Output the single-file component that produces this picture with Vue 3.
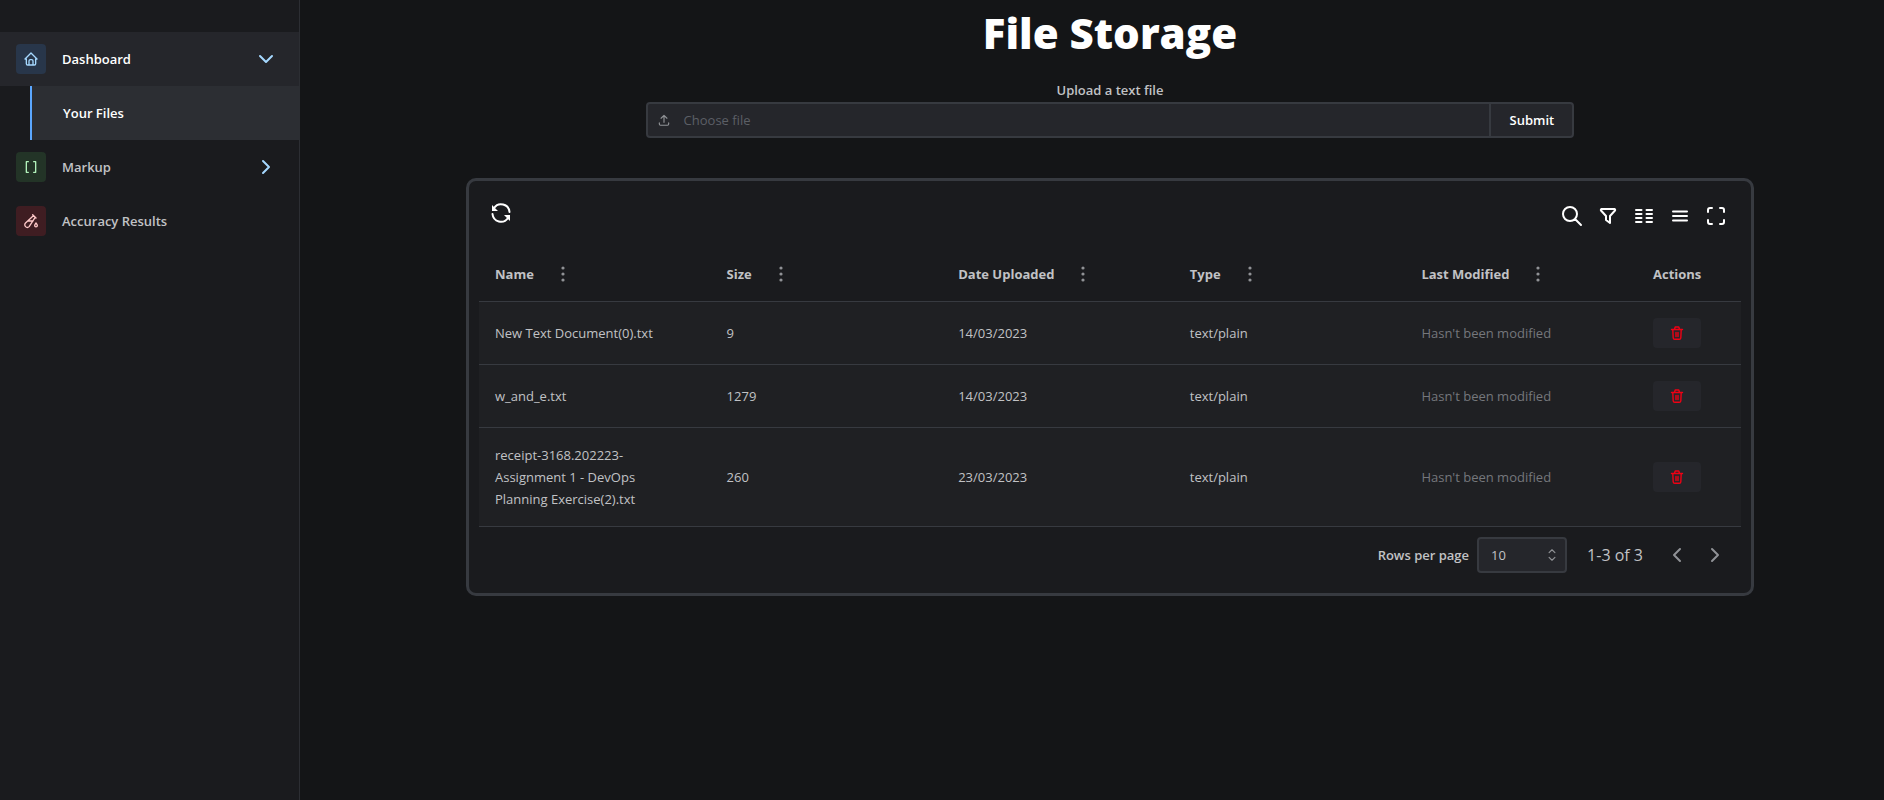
<script setup>
import { ref } from 'vue'

const pageSize = ref('10')
const columns = ['Name', 'Size', 'Date Uploaded', 'Type', 'Last Modified']
const files = [
  { name: 'New Text Document(0).txt', size: 9, date: '14/03/2023', type: 'text/plain' },
  { name: 'w_and_e.txt', size: 1279, date: '14/03/2023', type: 'text/plain' },
  { name: 'receipt-3168.202223-Assignment 1 - DevOps Planning Exercise(2).txt', size: 260, date: '23/03/2023', type: 'text/plain' },
]
const tools = [
  { label: 'Show search', d: 'M3 10a7 7 0 1 0 14 0a7 7 0 1 0 -14 0M21 21l-6 -6' },
  { label: 'Show filters', d: 'M5.5 5h13a1 1 0 0 1 .5 1.5l-5 5.5v7l-4 -3v-4l-5 -5.5a1 1 0 0 1 .5 -1.5' },
  { label: 'Show columns', d: 'M4 6h5.5M4 10h5.5M4 14h5.5M4 18h5.5M14.5 6H20M14.5 10H20M14.5 14H20M14.5 18H20' },
  { label: 'Toggle density', d: 'M5 7.5h14M5 12h14M5 16.5h14' },
  { label: 'Full screen', d: 'M4 8V6a2 2 0 0 1 2 -2h2M4 16v2a2 2 0 0 0 2 2h2M16 4h2a2 2 0 0 1 2 2v2M16 20h2a2 2 0 0 0 2 -2v-2' },
]
</script>

<template>
  <div class="layout">
    <nav class="sidebar">
      <button type="button" class="item open">
        <span class="badge blue">
          <svg width="16" height="16" viewBox="0 0 24 24"><path d="M5 12H3l9 -9l9 9h-2v7a2 2 0 0 1 -2 2H7a2 2 0 0 1 -2 -2v-7M9 21v-6a2 2 0 0 1 2 -2h2a2 2 0 0 1 2 2v6" /></svg>
        </span>
        <span class="text">Dashboard</span>
        <svg class="arrow" width="24" height="24" viewBox="0 0 24 24"><path d="M6 9l6 6l6 -6" /></svg>
      </button>
      <a href="#files" class="sub">Your Files</a>
      <button type="button" class="item">
        <span class="badge green">
          <svg width="16" height="16" viewBox="0 0 24 24"><path d="M8 4H5v16h3M16 4h3v16h-3" /></svg>
        </span>
        <span class="text">Markup</span>
        <svg class="arrow" width="24" height="24" viewBox="0 0 24 24"><path d="M9 6l6 6l-6 6" /></svg>
      </button>
      <a href="#results" class="item">
        <span class="badge red">
          <svg width="16" height="16" viewBox="0 0 24 24"><path d="M14.5 2.500l5 5M15.500 4L3.800 15a3.800 3.800 0 0 0 5.400 5.400L18 7M8 12h7M19.500 15c1.500 2 2 2.800 2 3.800a2 2 0 0 1 -4 0c0 -1 .5 -1.800 2 -3.800z" /></svg>
        </span>
        <span class="text">Accuracy Results</span>
      </a>
    </nav>

    <main class="main">
      <h1 class="title">File Storage</h1>
      <form class="upload" @submit.prevent>
        <label for="upload-file" class="upload-label">Upload a text file</label>
        <div class="upload-row">
          <button id="upload-file" type="button" class="chooser">
            <svg width="14" height="14" viewBox="0 0 24 24"><path d="M4 17v2a2 2 0 0 0 2 2h12a2 2 0 0 0 2 -2v-2M7 9l5 -5l5 5M12 4v12" /></svg>
            <span>Choose file</span>
          </button>
          <button type="submit" class="submit">Submit</button>
        </div>
      </form>

      <section class="card">
        <div class="toolbar">
          <button type="button" class="icon-btn small" aria-label="Refresh">
            <svg width="20" height="20" viewBox="0 0 20 20">
              <path d="M18.500 9A8.500 8.500 0 0 0 3 5M1.500 11A8.500 8.500 0 0 0 17 15" />
              <path class="solid" d="M1 2v6h6zM19 18v-6h-6z" />
            </svg>
          </button>
          <div class="tools">
            <button v-for="t in tools" :key="t.label" type="button" class="icon-btn" :aria-label="t.label">
              <svg width="24" height="24" viewBox="0 0 24 24"><path :d="t.d" /></svg>
            </button>
          </div>
        </div>

        <table class="table">
          <thead>
            <tr>
              <th v-for="c in columns" :key="c">
                <div class="head">
                  {{ c }}
                  <button type="button" class="dots" aria-label="Column actions">
                    <svg width="6" height="18" viewBox="0 0 6 18"><circle cx="3" cy="3" r="1.600" /><circle cx="3" cy="9" r="1.600" /><circle cx="3" cy="15" r="1.600" /></svg>
                  </button>
                </div>
              </th>
              <th class="actions">Actions</th>
            </tr>
          </thead>
          <tbody>
            <tr v-for="f in files" :key="f.name">
              <td class="name">{{ f.name }}</td>
              <td>{{ f.size }}</td>
              <td>{{ f.date }}</td>
              <td>{{ f.type }}</td>
              <td class="dim">Hasn't been modified</td>
              <td>
                <button type="button" class="delete" aria-label="Delete">
                  <svg width="16" height="16" viewBox="0 0 16 16"><path d="M2.500 4.500h11M3.800 4.500l.4 8.500a1.500 1.500 0 0 0 1.500 1.300h4.600a1.500 1.500 0 0 0 1.500 -1.300l.4 -8.500M5.500 4.300l.7 -2.300h3.600l.7 2.300M7 7.500v4M9 7.500v4" /></svg>
                </button>
              </td>
            </tr>
          </tbody>
        </table>

        <div class="footer">
          <label for="page-size" class="rows-label">Rows per page</label>
          <div class="select">
            <select id="page-size" v-model="pageSize">
              <option>10</option>
              <option>25</option>
              <option>50</option>
            </select>
            <svg width="14" height="14" viewBox="0 0 24 24"><path d="M7 8l5 -5l5 5M7 16l5 5l5 -5" /></svg>
          </div>
          <span class="range">1-3 of 3</span>
          <div class="pager">
            <button type="button" aria-label="Previous page"><svg width="24" height="24" viewBox="0 0 24 24"><path d="M15 6l-6 6l6 6" /></svg></button>
            <button type="button" aria-label="Next page"><svg width="24" height="24" viewBox="0 0 24 24"><path d="M9 6l6 6l-6 6" /></svg></button>
          </div>
        </div>
      </section>
    </main>
  </div>
</template>

<style>
body {
  background: #141517;
}
</style>

<style scoped>
.layout {
  display: flex;
  min-height: 100vh;
  font-family: 'Segoe UI', 'Open Sans', 'Noto Sans', sans-serif;
  font-size: 13px;
  line-height: 22px;
  color: #c1c2c5;
  background: #141517;
}
.layout *,
.layout {
  box-sizing: border-box;
}
button,
select {
  font: inherit;
  color: inherit;
  background: none;
  border: 0;
  padding: 0;
  margin: 0;
}
svg {
  display: block;
  flex: none;
  fill: none;
  stroke: currentColor;
  stroke-width: 2;
  stroke-linecap: round;
  stroke-linejoin: round;
}
a {
  color: inherit;
  text-decoration: none;
}

.sidebar {
  width: 300px;
  flex: none;
  padding-top: 32px;
  background: #1a1b1e;
  border-right: 1px solid #2c2e33;
}
.item {
  display: flex;
  align-items: center;
  gap: 16px;
  width: 100%;
  height: 54px;
  padding: 0 21px 0 16px;
  font-weight: 600;
  text-align: left;
}
.item.open {
  background: #25262b;
  color: #fff;
}
.text {
  flex: 1;
}
.arrow {
  color: #a5d8ff;
}
.badge {
  display: grid;
  place-items: center;
  width: 30px;
  height: 30px;
  border-radius: 4px;
}
.blue {
  background: #28364a;
  color: #a5d8ff;
}
.green {
  background: #233427;
  color: #b2f2bb;
}
.red {
  background: #3f1d22;
  color: #ffc9c9;
}
.sub {
  display: flex;
  align-items: center;
  height: 54px;
  margin-left: 30px;
  padding-left: 31px;
  border-left: 2px solid #5ba7ff;
  background: #2c2e33;
  color: #fff;
  font-weight: 600;
}

.main {
  flex: 1;
  min-width: 0;
  padding-left: 36px;
  display: flex;
  flex-direction: column;
  align-items: center;
}
.title {
  margin: 0;
  height: 79px;
  font-size: 42px;
  line-height: 66px;
  font-weight: 900;
  color: #fff;
}
.upload {
  width: 60%;
  display: flex;
  flex-direction: column;
  align-items: center;
}
.upload-label {
  height: 23px;
  font-weight: 600;
}
.upload-row {
  display: flex;
  width: 100%;
  height: 36px;
  border: 2px solid #373a40;
  border-radius: 4px;
  background: #25262b;
}
.chooser {
  flex: 1;
  display: flex;
  align-items: center;
  gap: 13px;
  padding-left: 9px;
  color: #5c5f66;
}
.chooser svg {
  color: #909296;
}
.submit {
  width: 83px;
  border-left: 2px solid #373a40;
  color: #fff;
  font-weight: 600;
}

.card {
  width: calc(100% - 260px);
  margin-top: 40px;
  padding: 10px;
  border: 3px solid #373a40;
  border-radius: 10px;
  background: #1a1b1e;
}
.toolbar {
  display: flex;
  justify-content: space-between;
  align-items: flex-start;
  height: 56px;
  padding: 8px;
  color: #fff;
}
.tools {
  display: flex;
  gap: 2px;
}
.icon-btn {
  display: grid;
  place-items: center;
  width: 34px;
  height: 34px;
}
.icon-btn.small {
  width: 28px;
  height: 28px;
}
.solid {
  fill: currentColor;
  stroke: none;
}

.table {
  width: 100%;
  table-layout: fixed;
  border-collapse: separate;
  border-spacing: 0;
}
th,
td {
  padding: 16px;
  text-align: left;
  vertical-align: middle;
  border-bottom: 1px solid #373a40;
}
th {
  font-weight: 700;
}
.actions {
  width: 104px;
}
.head {
  display: flex;
  align-items: center;
  gap: 26px;
}
.dots svg {
  fill: #909296;
  stroke: none;
}
tbody tr {
  background: #1f2023;
}
td.name {
  padding-right: 40px;
}
.dim {
  color: #75777c;
}
.delete {
  display: grid;
  place-items: center;
  width: 48px;
  height: 30px;
  border-radius: 4px;
  background: #25262b;
  color: #f00014;
}
.delete svg {
  stroke-width: 1.4;
}

.footer {
  display: flex;
  align-items: center;
  justify-content: flex-end;
  height: 56px;
  padding-right: 14px;
}
.rows-label {
  font-weight: 600;
}
.select {
  position: relative;
  width: 90px;
  height: 36px;
  margin: 0 20px 0 8px;
}
.select select {
  appearance: none;
  width: 100%;
  height: 100%;
  padding-left: 12px;
  border: 2px solid #373a40;
  border-radius: 4px;
  background: #25262b;
}
.select svg {
  position: absolute;
  right: 8px;
  top: 11px;
  color: #909296;
  pointer-events: none;
}
.range {
  font-size: 16px;
}
.pager {
  display: flex;
  gap: 14px;
  margin-left: 22px;
  color: #909296;
}
</style>
